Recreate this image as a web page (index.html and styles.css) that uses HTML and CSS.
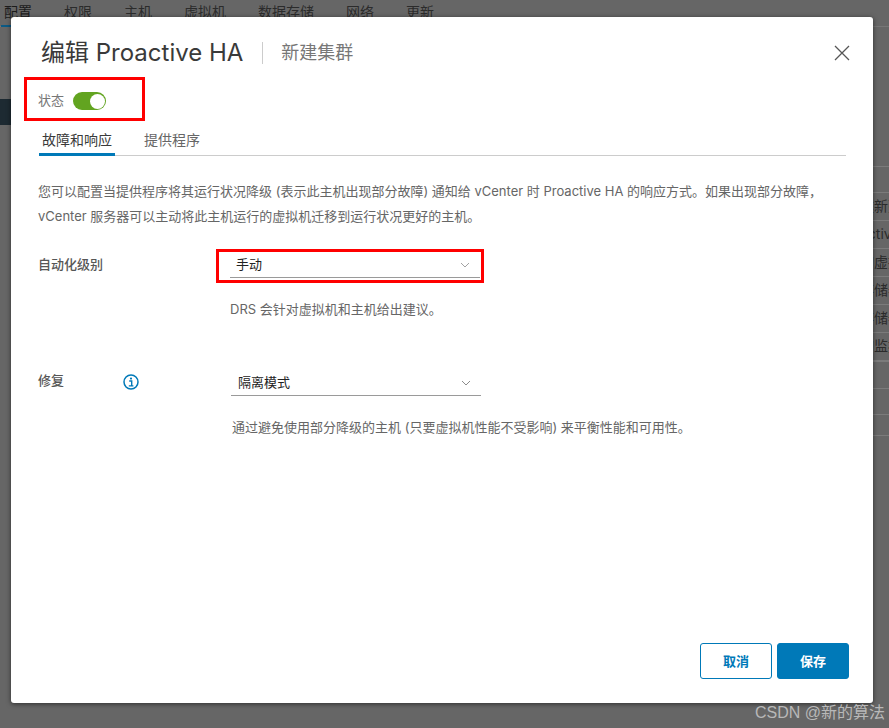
FILE: index.html
```html
<!DOCTYPE html>
<html lang="zh-CN">
<head>
<meta charset="utf-8">
<title>编辑 Proactive HA</title>
<link rel="stylesheet" href="styles.css">
</head>
<body>
<div class="backdrop">
  <nav class="bg-tabs">
    <span class="bg-tab bg-tab-active">配置</span>
    <span class="bg-tab">权限</span>
    <span class="bg-tab">主机</span>
    <span class="bg-tab">虚拟机</span>
    <span class="bg-tab">数据存储</span>
    <span class="bg-tab">网络</span>
    <span class="bg-tab">更新</span>
  </nav>
  <div class="bg-dark-block"></div>
  <ul class="bg-list">
    <li class="bg-row bg-row-head"></li>
    <li class="bg-row">建新建</li>
    <li class="bg-row">active</li>
    <li class="bg-row">的虚拟</li>
    <li class="bg-row">存储器</li>
    <li class="bg-row">存储器</li>
    <li class="bg-row">的监控</li>
    <li class="bg-row bg-row-thick"></li>
    <li class="bg-row bg-row-head"></li>
    <li class="bg-row bg-row-short"></li>
    <li class="bg-row"></li>
  </ul>
</div>

<section class="modal">
  <header class="modal-head">
    <h1 class="modal-title">编辑 Proactive HA</h1>
    <span class="modal-sub">新建集群</span>
    <svg class="modal-close" viewBox="0 0 16 16" width="16" height="16" aria-label="关闭"><path d="M1 1 L15 15 M15 1 L1 15" fill="none" stroke="#565656" stroke-width="1.3"/></svg>
  </header>

  <div class="status">
    <span class="status-label">状态</span>
    <span class="toggle"><span class="toggle-knob"></span></span>
  </div>

  <div class="tabs">
    <span class="tab tab-active">故障和响应</span>
    <span class="tab">提供程序</span>
  </div>

  <p class="intro">您可以配置当提供程序将其运行状况降级 (表示此主机出现部分故障) 通知给 vCenter 时 Proactive HA 的响应方式。如果出现部分故障，<br>vCenter 服务器可以主动将此主机运行的虚拟机迁移到运行状况更好的主机。</p>

  <div class="field field-auto">
    <div class="field-label"><span>自动化级别</span></div>
    <div class="field-body">
      <div class="select">
        <span class="select-value">手动</span>
        <svg class="chev" viewBox="0 0 10 6" width="10" height="6"><path d="M1 1 L5 5 L9 1" fill="none" stroke="#a3a3a3" stroke-width="1"/></svg>
      </div>
      <p class="help">DRS 会针对虚拟机和主机给出建议。</p>
    </div>
  </div>

  <div class="field field-fix">
    <div class="field-label"><span>修复</span>
      <svg class="info" viewBox="0 0 16 16" width="16" height="16"><circle cx="8" cy="8" r="7" fill="none" stroke="#0079b8" stroke-width="1.5"/><circle cx="8" cy="4.6" r="1.1" fill="#0079b8"/><path d="M6.2 7 H8.7 V11.6 M5.8 11.9 H10.4" fill="none" stroke="#0079b8" stroke-width="1.4"/></svg>
    </div>
    <div class="field-body">
      <div class="select">
        <span class="select-value select-value-fix">隔离模式</span>
        <svg class="chev" viewBox="0 0 10 6" width="10" height="6"><path d="M1 1 L5 5 L9 1" fill="none" stroke="#8c8c8c" stroke-width="1"/></svg>
      </div>
      <p class="help">通过避免使用部分降级的主机 (只要虚拟机性能不受影响) 来平衡性能和可用性。</p>
    </div>
  </div>

  <footer class="modal-foot">
    <button class="btn btn-outline">取消</button>
    <button class="btn btn-primary">保存</button>
  </footer>
</section>

<div class="mark mark-status"></div>
<div class="mark mark-select"></div>
<div class="watermark">CSDN @新的算法</div>
</body>
</html>
```
FILE: styles.css
```css
* { box-sizing: border-box; }
html, body { margin: 0; height: 100%; }
body {
  width: 889px;
  height: 728px;
  overflow: hidden;
  position: relative;
  background: #666;
  font-family: "Inter", "Noto Sans CJK SC", sans-serif;
  color: #565656;
}
.backdrop { height: 728px; background: #666; color: #2b2b2b; overflow: hidden; }
.bg-tabs { display: flex; gap: 32px; padding: 3px 0 0 4px; height: 27px; font-size: 14px; line-height: 17px; border-bottom: 1px solid #767676; }
.bg-tab { height: 24px; white-space: nowrap; }
.bg-tab-active { border-bottom: 2px solid #0b5a85; width: 31px; margin-left: -3px; padding-left: 3px; color: #1c1c1c; }
.bg-dark-block { width: 11px; height: 26px; margin-top: 72px; background: #1d2a32; }
.bg-list { list-style: none; margin: 41px 0 0 860px; padding: 0; width: 29px; overflow: hidden; }
.bg-row {
  height: 28px; line-height: 26px; font-size: 14px; white-space: nowrap;
  border-top: 1px solid #7b7b7b; color: #2b2b2b;
}
.bg-row-head { height: 26px; }
.bg-row-short { height: 21px; }
.bg-row-thick { border-top: 2px solid #7b7b7b; }

.modal {
  position: absolute; left: 11px; top: 17px; width: 862px; height: 686px;
  background: #fff; border-radius: 3px; box-shadow: 0 1px 5px rgba(0,0,0,.55);
  padding: 0 27px;
  display: flex; flex-direction: column;
}
.modal-head { display: flex; align-items: center; height: 37px; margin-top: 17px; padding-left: 3px; }
.modal-title { margin: 0; font-size: 24px; font-weight: 400; color: #3a3a3a; line-height: 37px; white-space: nowrap; }
.modal-sub { margin-left: 19px; padding-left: 18px; border-left: 1px solid #ccc; height: 22px; line-height: 22px; font-size: 18px; color: #777; }
.modal-close { margin-left: auto; margin-right: -4px; }

.status { display: flex; align-items: center; gap: 9px; height: 20px; margin-top: 20px; }
.status-label { font-size: 13px; color: #777; padding-bottom: 4px; }
.toggle { width: 33px; height: 18px; border-radius: 9px; background: #62a420; position: relative; }
.toggle-knob { position: absolute; right: 1.5px; top: 1.5px; width: 15px; height: 15px; border-radius: 50%; background: #fff; }

.tabs { display: flex; gap: 29px; height: 26px; margin-top: 19px; border-bottom: 1px solid #ccc; margin-left: 1px; width: 807px; }
.tab { font-size: 14px; line-height: 19px; height: 26px; color: #666; }
.tab-active { color: #3a3a3a; border-bottom: 3px solid #0079b8; padding: 0 3px; }

.intro { margin: 23px 0 0; font-size: 13px; line-height: 25px; color: #666; white-space: nowrap; }

.field { display: flex; }
.field-auto { margin-top: 26px; }
.field-fix { margin-top: 53px; }
.field-label { width: 192px; display: flex; align-items: flex-start; font-size: 13px; font-weight: 500; color: #565656; line-height: 18px; }
.field-fix .field-label { width: 193px; }
.info { margin-left: 59px; margin-top: 3px; }
.select {
  width: 250px; height: 26px; border-bottom: 1px solid #9a9a9a;
  display: flex; align-items: center; justify-content: space-between; padding: 0 10px 2px 6px;
}
.chev { margin-top: 2px; }
.select-value { font-size: 13px; color: #222; }
.select-value-fix { padding-left: 1px; }
.help { margin: 0; font-size: 13px; line-height: 18px; color: #666; white-space: nowrap; }
.field-auto .select { margin-top: -3px; }
.field-auto .help { padding-top: 22px; }
.field-fix .select { margin-top: -1px; }
.field-fix .help { padding-top: 22px; padding-left: 1px; }

.modal-foot { margin-top: auto; margin-bottom: 24px; margin-right: -3px; display: flex; justify-content: flex-end; gap: 5px; }
.btn { width: 72px; height: 36px; border-radius: 3px; font: 700 13px "Inter", "Noto Sans CJK SC", sans-serif; cursor: pointer; padding-bottom: 2px; }
.btn-outline { background: #fff; color: #0079b8; border: 1px solid #0079b8; }
.btn-primary { background: #0079b8; color: #fff; border: 1px solid #0079b8; }

.mark { position: absolute; border: 3px solid #f00; }
.mark-status { left: 24px; top: 77px; width: 121px; height: 44px; }
.mark-select { left: 216px; top: 249px; width: 268px; height: 34px; }
.watermark { position: absolute; right: 4px; bottom: 6px; font-family: "Liberation Sans", "Noto Sans CJK SC", sans-serif; font-size: 16px; line-height: 18px; color: #b8b8b8; white-space: nowrap; }
```
